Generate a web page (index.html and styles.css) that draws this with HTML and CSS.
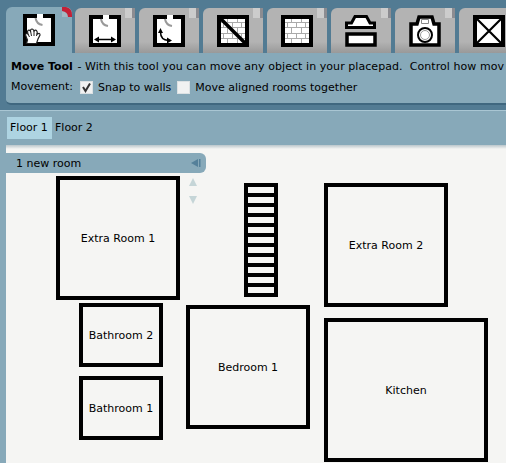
FILE: index.html
```html
<!DOCTYPE html>
<html lang="en">
<head>
<meta charset="utf-8">
<title>Placepad</title>
<link rel="stylesheet" href="styles.css">
</head>
<body>
<div class="app">
  <header class="toolbar">
    <nav class="tabs">
      <div class="tab active" aria-label="Move">
        <svg class="icon" viewBox="0 0 32 32">
          <path d="M2 2H30V30H2Z" fill="#fff" stroke="#000" stroke-width="4"/>
          <path d="M14 0h6v5h-6z" fill="#fff"/>
          <path d="M12.500 4q1 6 7 7" fill="none" stroke="#999" stroke-width="2"/>
          <path d="M3.500 29.500L4.500 26 2.500 21Q3 18.500 5 20L4.500 17.500Q5.500 15 7.500 17V16Q9 14 10.500 16L11 17Q13 15 14 17.500L14.500 20Q17 18.500 17 21L15 25 13.500 29.500Z" fill="#fff" stroke="#222" stroke-width="1.200"/>
          <path d="M5 20l1.500 3M7.500 17l1 5M11 17v5M14 19l-.5 3" stroke="#222" fill="none"/>
        </svg>
        <svg class="corner" viewBox="0 0 10 10"><path d="M0 4Q5 4 6 10H0Z" fill="#a3b8c3"/><path d="M0 0H4Q10 1 10 8V10H6Q6 5 0 4Z" fill="#c52036"/></svg>
      </div>
      <div class="tab" aria-label="Resize">
        <svg class="icon" viewBox="0 0 32 32">
          <path d="M2 2H30V30H2Z" fill="#fff" stroke="#000" stroke-width="4"/>
          <path d="M14 0h6v5h-6z" fill="#fff"/>
          <path d="M12 4q1 6 7 7" fill="none" stroke="#999" stroke-width="2"/>
          <path d="M8 24.500H24" stroke="#000" stroke-width="1.500"/>
          <path d="M5 24.500l5-3v6zM27 24.500l-5-3v6z"/>
        </svg>
      </div>
      <div class="tab" aria-label="Rotate">
        <svg class="icon" viewBox="0 0 32 32">
          <path d="M2 2H30V30H2Z" fill="#fff" stroke="#000" stroke-width="4"/>
          <path d="M14 0h6v5h-6z" fill="#fff"/>
          <path d="M12 4q1 6 7 7" fill="none" stroke="#999" stroke-width="2"/>
          <path d="M7.500 17q0 8 8 8.500" fill="none" stroke="#000" stroke-width="1.500"/>
          <path d="M7.500 13l-2.500 5h5zM19 25.500l-5-3v6z"/>
        </svg>
      </div>
      <div class="tab" aria-label="Remove wall">
        <svg class="icon" viewBox="0 0 32 32">
          <path d="M2 2H30V30H2Z" fill="#fff" stroke="#000" stroke-width="4"/>
          <path d="M4 7.500H28M4 12.500H28M4 18.500H28M4 23.500H28M10.500 4v3M20.500 4v3M6.500 8v4M15.500 8v4M24.500 8v4M10.500 13v5M20.500 13v5M6.500 19v4M15.500 19v4M24.500 19v4M10.500 24v4M20.500 24v4" stroke="#aaa" fill="none"/>
          <path d="M3 3L29 29" stroke="#000" stroke-width="3.500"/>
        </svg>
      </div>
      <div class="tab" aria-label="Wall">
        <svg class="icon" viewBox="0 0 32 32">
          <path d="M2 2H30V30H2Z" fill="#fff" stroke="#000" stroke-width="4"/>
          <path d="M4 7.500H28M4 12.500H28M4 18.500H28M4 23.500H28M10.500 4v3M20.500 4v3M6.500 8v4M15.500 8v4M24.500 8v4M10.500 13v5M20.500 13v5M6.500 19v4M15.500 19v4M24.500 19v4M10.500 24v4M20.500 24v4" stroke="#aaa" fill="none"/>
        </svg>
      </div>
      <div class="tab" aria-label="Fixtures">
        <svg class="icon" viewBox="0 0 32 32">
          <path d="M1.500 12.500V8H6.500L10 1.500H21.500L25 8H29.500V12.500Z" fill="#fff" stroke="#000" stroke-width="3"/>
          <path d="M2 19H30V30H2Z" fill="#fff" stroke="#000" stroke-width="3.500"/>
        </svg>
      </div>
      <div class="tab" aria-label="Camera">
        <svg class="icon" viewBox="0 0 32 32">
          <path d="M2 30V9H8L10 2H23L25 9H30V30Z" fill="#fff" stroke="#000" stroke-width="3.500"/>
          <path d="M12.500 4.500h7v4h-7z" fill="#fff" stroke="#888"/>
          <circle cx="16" cy="20" r="7" fill="#fff" stroke="#000" stroke-width="2"/>
          <circle cx="16" cy="20" r="4.500" fill="#fff" stroke="#999"/>
        </svg>
      </div>
      <div class="tab" aria-label="Delete">
        <svg class="icon" viewBox="0 0 32 32">
          <path d="M2 2H30V30H2Z" fill="#fff" stroke="#000" stroke-width="4"/>
          <path d="M3 3L29 29M29 3L3 29" stroke="#000" stroke-width="2.200"/>
        </svg>
      </div>
    </nav>
    <section class="panel">
      <p class="desc"><b>Move Tool</b> - With this tool you can move any object in your placepad.&nbsp; Control how mov</p>
      <div class="options">
        <span class="caption">Movement:</span>
        <span class="check"><svg viewBox="0 0 11 11"><path d="M2 5l2.500 4L9 1.500" fill="none" stroke="#333" stroke-width="2"/></svg></span>
        <span class="option">Snap to walls</span>
        <span class="check"></span>
        <span class="option">Move aligned rooms together</span>
      </div>
    </section>
  </header>
  <nav class="floors"><span class="floor selected">Floor 1</span><span class="floor">Floor 2</span></nav>
  <main class="canvas">
    <div class="drawer"><span>1 new room</span>
      <svg class="collapse" viewBox="0 0 10 8"><path d="M0 4L7 0V8ZM8 0h1.500v8H8z" fill="#54809a"/></svg>
    </div>
    <svg class="scroll" viewBox="0 0 8 26"><path d="M4 0L8 8H0ZM0 18H8L4 26Z" fill="#c5d5d7"/></svg>
    <div class="room extra1">Extra Room 1</div>
    <div class="room extra2">Extra Room 2</div>
    <div class="room bath2">Bathroom 2</div>
    <div class="room bath1">Bathroom 1</div>
    <div class="room bed1">Bedroom 1</div>
    <div class="room kitchen">Kitchen</div>
    <div class="stairs"></div>
  </main>
</div>
</body>
</html>
```
FILE: styles.css
```css
* { box-sizing: border-box; }
body { margin: 0; font: 11px/14px "DejaVu Sans", Verdana, sans-serif; color: #000; }
.app { width: 506px; height: 463px; overflow: hidden; display: flex; flex-direction: column; background: #87a9b9; }
.toolbar { height: 110px; flex: none; padding: 7px 0 0 6px; background: #527b93; }
.tabs { display: flex; gap: 4px; width: 520px; height: 46px; align-items: flex-end; }
.tab { position: relative; flex: none; width: 60px; height: 45px; padding: 7px 0 0 14px; border-radius: 6px 0 0 0; background: linear-gradient(#b3b3b3 75%, #999); }
.tab.active { width: 66px; height: 46px; padding: 7px 0 0 17px; margin-right: -1px; border-radius: 6px 6px 0 0; background: #87a9b9; }
.tab::after { content: ""; position: absolute; top: 0; right: 0; width: 10px; height: 10px; background: linear-gradient(90deg, #ccc 7px, #8c8c91 7px); }
.tab.active::after { content: none; }
.corner { position: absolute; top: 0; right: 0; width: 10px; height: 10px; }
.icon { display: block; width: 32px; height: 32px; }
.panel { height: 52px; padding: 7px 0 0 5px; border-bottom: 2px solid #3f677f; border-radius: 0 0 0 5px; background: #87a9b9; }
.desc { margin: 0; white-space: pre; letter-spacing: 0.06px; }
.desc b { margin-right: 1px; letter-spacing: 0; }
.options { display: flex; align-items: center; height: 14px; margin-top: 6px; white-space: nowrap; }
.caption { width: 69px; }
.check { width: 13px; height: 13px; background: #f1f2f2; border: 1px solid #dce1e3; margin-right: 5px; }
.check svg { display: block; width: 11px; height: 11px; }
.option { margin-right: 6px; padding-top: 1px; }
.floors { height: 35px; flex: none; padding: 6px 0 0 7px; border-top: 1px solid #a9c6d3; display: flex; }
.floor { height: 22px; padding: 4px 3px; }
.floor.selected { width: 45px; background: #aed4e2; }
.canvas { position: relative; flex: 1; margin-left: 6px; padding-top: 8px; background: linear-gradient(#bac6cb, #f5f5f3 4px); overflow: hidden; }
.drawer { display: flex; align-items: center; justify-content: space-between; width: 200px; height: 20px; padding: 0 5px 0 10px; border-radius: 0 6px 6px 0; background: #87a9b9; }
.drawer span { padding-top: 2px; }
.collapse { width: 10px; height: 8px; }
.scroll { position: absolute; left: 183px; top: 33px; width: 8px; height: 26px; }
.room { position: absolute; display: flex; align-items: center; justify-content: center; padding-top: 2px; border: 4px solid #000; white-space: nowrap; }
.extra1 { left: 50px; top: 31px; width: 124px; height: 124px; }
.extra2 { left: 318px; top: 38px; width: 124px; height: 124px; }
.bath2 { left: 73px; top: 158px; width: 84px; height: 64px; }
.bath1 { left: 73px; top: 231px; width: 84px; height: 64px; }
.bed1 { left: 180px; top: 160px; width: 124px; height: 124px; }
.kitchen { left: 318px; top: 173px; width: 164px; height: 144px; }
.stairs { position: absolute; left: 238px; top: 38px; width: 34px; height: 114px; border: 4px solid #000; background: repeating-linear-gradient(transparent 0 6px, #000 6px 10px); }
```
